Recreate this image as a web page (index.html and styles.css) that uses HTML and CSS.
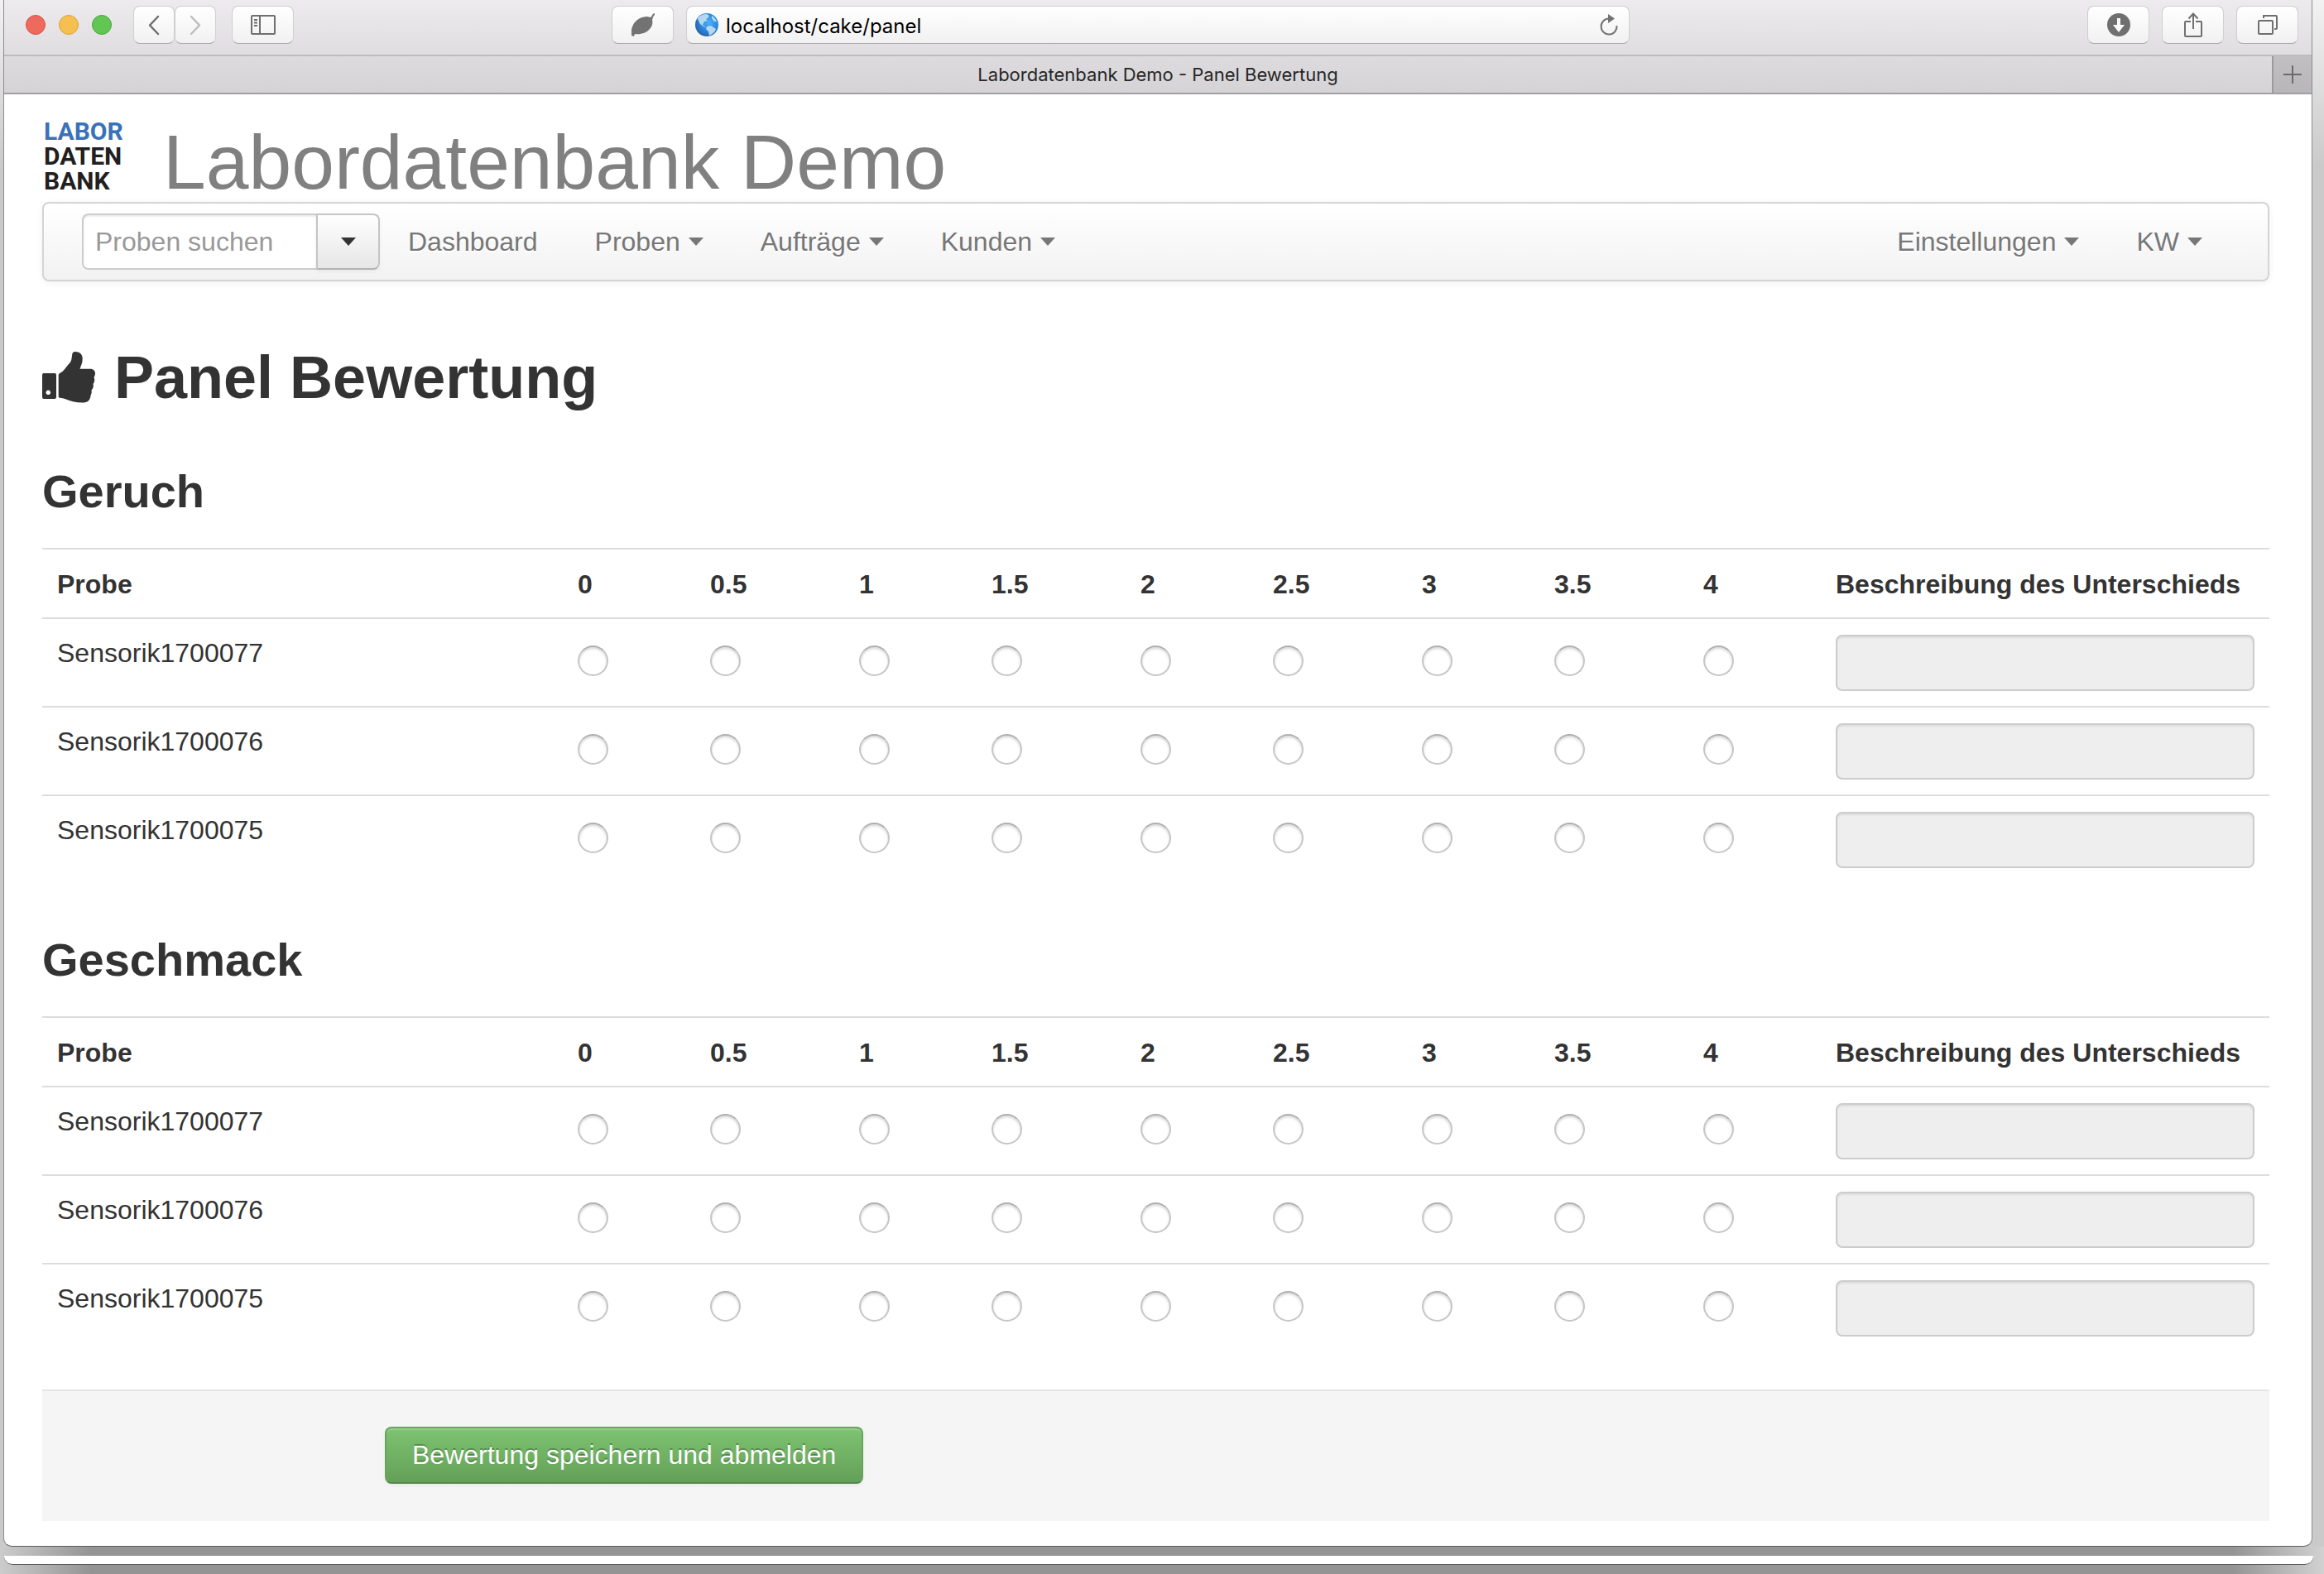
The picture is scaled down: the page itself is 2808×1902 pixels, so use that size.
FILE: index.html
```html
<!DOCTYPE html>
<html lang="de">
<head>
<meta charset="utf-8">
<title>Labordatenbank Demo - Panel Bewertung</title>
<link rel="stylesheet" href="styles.css">
</head>
<body>
<div class="window">
  <div class="toolbar">
    <div class="tools">
      <div class="lights"><span class="light light-red"></span><span class="light light-yellow"></span><span class="light light-green"></span></div>
      <div class="history">
        <button class="tool tool-narrow" aria-label="Zurück"><svg width="14" height="25" viewBox="0 0 14 25" fill="none" stroke="#6f6f6f" stroke-width="2.5" stroke-linecap="round" stroke-linejoin="round"><path d="M12 2 2 12.500 12 23"/></svg></button>
        <button class="tool tool-narrow" aria-label="Vorwärts"><svg width="14" height="25" viewBox="0 0 14 25" fill="none" stroke="#bdbdbd" stroke-width="2.500" stroke-linecap="round" stroke-linejoin="round"><path d="M2 2 12 12.500 2 23"/></svg></button>
      </div>
      <button class="tool" aria-label="Seitenleiste"><svg width="30" height="24" viewBox="0 0 30 24" fill="none" stroke="#6f6f6f" stroke-width="2"><rect x="1" y="1" width="28" height="22" rx="1"/><path d="M11 1v22M4 6h4M4 9.500h4M4 13h4"/></svg></button>
      <button class="tool tool-last" aria-label="Erweiterung"><svg width="28" height="28" viewBox="0 0 28 28" fill="#737373"><path d="M0 27C-1 23 0 18 2 14 5 8 12 4 19 4l4 1c2-1 2-5 5-5v2c-2 1-2 4-3 6 1 4 0 8-3 11-4 5-11 7-18 6l-1 3z"/></svg></button>
    </div>
    <div class="address">
      <svg width="28" height="28" viewBox="0 0 28 28"><defs><radialGradient id="globe" cx=".6" cy=".4" r=".65"><stop offset="0" stop-color="#4fb0f5"/><stop offset=".6" stop-color="#2b86dc"/><stop offset="1" stop-color="#2560a5"/></radialGradient></defs><circle cx="14" cy="14" r="14" fill="url(#globe)"/><path d="M3 6C6 2 10 1 14 1l3 2-2 3-2 1 2 2-4 1-2 4 4 3-3-1-4-3-3-6zM14 16l5-1 6 4c-1 4-4 6-8 8l-1-5-3-3zM20 3c3 2 5 4 6 7l-3 0-3-4z" fill="#c4dff2" opacity=".9"/></svg>
      <input class="address-input" type="text" value="localhost/cake/panel" aria-label="Adresse">
      <button class="reload" aria-label="Neu laden"><svg width="24" height="26" viewBox="0 0 24 26"><path d="M11.500 5.500A9.500 9.500 0 1 0 21.500 14" fill="none" stroke="#737373" stroke-width="2"/><path d="M11 0l8 5.500L11 11z" fill="#737373"/></svg></button>
    </div>
    <div class="tools tools-right">
      <button class="tool" aria-label="Downloads"><svg width="28" height="28" viewBox="0 0 28 28"><circle cx="14" cy="14" r="14" fill="#6f6f6f"/><path d="M12 6h4v8h5l-7 9-7-9h5z" fill="#fafafa"/></svg></button>
      <button class="tool" aria-label="Teilen"><svg width="22" height="30" viewBox="0 0 22 30" fill="none" stroke="#6f6f6f" stroke-width="2"><path d="M8 11H2q-1 0-1 1v16q0 1 1 1h18q1 0 1-1V12q0-1-1-1h-6M11 20V2M5.500 7.500 11 1.500l5.500 6"/></svg></button>
      <button class="tool" aria-label="Tabs"><svg width="24" height="24" viewBox="0 0 24 24" fill="none" stroke="#6f6f6f" stroke-width="2"><rect x="1" y="7" width="17" height="16" rx="1"/><path d="M7 4V1h15q1 0 1 1v14q0 1-1 1h-2"/></svg></button>
    </div>
  </div>
  <div class="tabs">
    <div class="tab">Labordatenbank Demo - Panel Bewertung</div>
    <button class="tab-add" aria-label="Neuer Tab"><svg width="22" height="22" viewBox="0 0 22 22" stroke="#6b6b6b" stroke-width="2"><path d="M11 0v22M0 11h22"/></svg></button>
  </div>

  <main class="page">
    <header class="brand">
      <div class="logo"><span class="logo-accent">LABOR</span><span>DATEN</span><span>BANK</span></div>
      <div class="brand-title">Labordatenbank Demo</div>
    </header>
    <nav class="navbar">
      <div class="search">
        <input class="search-input" type="text" placeholder="Proben suchen" aria-label="Proben suchen">
        <button class="search-toggle" aria-label="Suchoptionen"><span class="caret"></span></button>
      </div>
      <a class="nav-link" href="#">Dashboard</a>
      <a class="nav-link" href="#">Proben<span class="caret"></span></a>
      <a class="nav-link" href="#">Aufträge<span class="caret"></span></a>
      <a class="nav-link" href="#">Kunden<span class="caret"></span></a>
      <a class="nav-link nav-right" href="#">Einstellungen<span class="caret"></span></a>
      <a class="nav-link" href="#">KW<span class="caret"></span></a>
    </nav>

    <h1><svg width="64" height="62" viewBox="0 0 64 62" fill="#333"><path fill-rule="evenodd" d="M2 26h13q2 0 2 2v27q0 2-2 2H2q-2 0-2-2V28q0-2 2-2zM7.300 46.500a2.800 2.800 0 1 0 .01 0z"/><path d="M19.700 28q0-1.500 2-2.300C26 24 29 18 33 14c3-3 2.500-8 3.500-12C37 .5 38.500 0 40 0c5 0 9 3 8.700 9 0 5-2 8-3.200 11.800H58c4 0 6 2.500 6 5.500 0 2-1 3.500-1.500 5 1.500 3 .5 6-1 7.700 1 3-.2 6-2 7.500.8 3-.5 5-1 6.500-.3 6-4 8.500-10 8.500-8 0-15-2-21-4.500-4-1.500-7.800-.5-7.800-3z"/></svg>Panel Bewertung</h1>

    <form>
      <section>
        <h2>Geruch</h2>
        <table>
          <colgroup><col><col class="c-full"><col class="c-half"><col class="c-full"><col class="c-half"><col class="c-full"><col class="c-half"><col class="c-full"><col class="c-half"><col class="c-full"><col class="c-text"></colgroup>
          <thead><tr><th>Probe</th><th>0</th><th>0.5</th><th>1</th><th>1.5</th><th>2</th><th>2.5</th><th>3</th><th>3.5</th><th>4</th><th>Beschreibung des Unterschieds</th></tr></thead>
          <tbody>
            <tr><td>Sensorik1700077</td>
              <td><input type="radio" name="geruch77" value="0" aria-label="0"></td>
              <td><input type="radio" name="geruch77" value="0.5" aria-label="0.5"></td>
              <td><input type="radio" name="geruch77" value="1" aria-label="1"></td>
              <td><input type="radio" name="geruch77" value="1.5" aria-label="1.5"></td>
              <td><input type="radio" name="geruch77" value="2" aria-label="2"></td>
              <td><input type="radio" name="geruch77" value="2.5" aria-label="2.5"></td>
              <td><input type="radio" name="geruch77" value="3" aria-label="3"></td>
              <td><input type="radio" name="geruch77" value="3.5" aria-label="3.5"></td>
              <td><input type="radio" name="geruch77" value="4" aria-label="4"></td>
              <td><input class="note" type="text" disabled aria-label="Beschreibung des Unterschieds"></td></tr>
            <tr><td>Sensorik1700076</td>
              <td><input type="radio" name="geruch76" value="0" aria-label="0"></td>
              <td><input type="radio" name="geruch76" value="0.5" aria-label="0.5"></td>
              <td><input type="radio" name="geruch76" value="1" aria-label="1"></td>
              <td><input type="radio" name="geruch76" value="1.5" aria-label="1.5"></td>
              <td><input type="radio" name="geruch76" value="2" aria-label="2"></td>
              <td><input type="radio" name="geruch76" value="2.5" aria-label="2.5"></td>
              <td><input type="radio" name="geruch76" value="3" aria-label="3"></td>
              <td><input type="radio" name="geruch76" value="3.5" aria-label="3.5"></td>
              <td><input type="radio" name="geruch76" value="4" aria-label="4"></td>
              <td><input class="note" type="text" disabled aria-label="Beschreibung des Unterschieds"></td></tr>
            <tr><td>Sensorik1700075</td>
              <td><input type="radio" name="geruch75" value="0" aria-label="0"></td>
              <td><input type="radio" name="geruch75" value="0.5" aria-label="0.5"></td>
              <td><input type="radio" name="geruch75" value="1" aria-label="1"></td>
              <td><input type="radio" name="geruch75" value="1.5" aria-label="1.5"></td>
              <td><input type="radio" name="geruch75" value="2" aria-label="2"></td>
              <td><input type="radio" name="geruch75" value="2.5" aria-label="2.5"></td>
              <td><input type="radio" name="geruch75" value="3" aria-label="3"></td>
              <td><input type="radio" name="geruch75" value="3.5" aria-label="3.5"></td>
              <td><input type="radio" name="geruch75" value="4" aria-label="4"></td>
              <td><input class="note" type="text" disabled aria-label="Beschreibung des Unterschieds"></td></tr>
          </tbody>
        </table>
      </section>
      <section>
        <h2>Geschmack</h2>
        <table>
          <colgroup><col><col class="c-full"><col class="c-half"><col class="c-full"><col class="c-half"><col class="c-full"><col class="c-half"><col class="c-full"><col class="c-half"><col class="c-full"><col class="c-text"></colgroup>
          <thead><tr><th>Probe</th><th>0</th><th>0.5</th><th>1</th><th>1.5</th><th>2</th><th>2.5</th><th>3</th><th>3.5</th><th>4</th><th>Beschreibung des Unterschieds</th></tr></thead>
          <tbody>
            <tr><td>Sensorik1700077</td>
              <td><input type="radio" name="geschmack77" value="0" aria-label="0"></td>
              <td><input type="radio" name="geschmack77" value="0.5" aria-label="0.5"></td>
              <td><input type="radio" name="geschmack77" value="1" aria-label="1"></td>
              <td><input type="radio" name="geschmack77" value="1.5" aria-label="1.5"></td>
              <td><input type="radio" name="geschmack77" value="2" aria-label="2"></td>
              <td><input type="radio" name="geschmack77" value="2.5" aria-label="2.5"></td>
              <td><input type="radio" name="geschmack77" value="3" aria-label="3"></td>
              <td><input type="radio" name="geschmack77" value="3.5" aria-label="3.5"></td>
              <td><input type="radio" name="geschmack77" value="4" aria-label="4"></td>
              <td><input class="note" type="text" disabled aria-label="Beschreibung des Unterschieds"></td></tr>
            <tr><td>Sensorik1700076</td>
              <td><input type="radio" name="geschmack76" value="0" aria-label="0"></td>
              <td><input type="radio" name="geschmack76" value="0.5" aria-label="0.5"></td>
              <td><input type="radio" name="geschmack76" value="1" aria-label="1"></td>
              <td><input type="radio" name="geschmack76" value="1.5" aria-label="1.5"></td>
              <td><input type="radio" name="geschmack76" value="2" aria-label="2"></td>
              <td><input type="radio" name="geschmack76" value="2.5" aria-label="2.5"></td>
              <td><input type="radio" name="geschmack76" value="3" aria-label="3"></td>
              <td><input type="radio" name="geschmack76" value="3.5" aria-label="3.5"></td>
              <td><input type="radio" name="geschmack76" value="4" aria-label="4"></td>
              <td><input class="note" type="text" disabled aria-label="Beschreibung des Unterschieds"></td></tr>
            <tr><td>Sensorik1700075</td>
              <td><input type="radio" name="geschmack75" value="0" aria-label="0"></td>
              <td><input type="radio" name="geschmack75" value="0.5" aria-label="0.5"></td>
              <td><input type="radio" name="geschmack75" value="1" aria-label="1"></td>
              <td><input type="radio" name="geschmack75" value="1.5" aria-label="1.5"></td>
              <td><input type="radio" name="geschmack75" value="2" aria-label="2"></td>
              <td><input type="radio" name="geschmack75" value="2.5" aria-label="2.5"></td>
              <td><input type="radio" name="geschmack75" value="3" aria-label="3"></td>
              <td><input type="radio" name="geschmack75" value="3.5" aria-label="3.5"></td>
              <td><input type="radio" name="geschmack75" value="4" aria-label="4"></td>
              <td><input class="note" type="text" disabled aria-label="Beschreibung des Unterschieds"></td></tr>
          </tbody>
        </table>
      </section>
      <div class="form-actions"><button class="save" type="submit">Bewertung speichern und abmelden</button></div>
    </form>
  </main>
</div>
<div class="shade"></div>
<div class="shade"><div class="window-behind"></div></div>
</body>
</html>
```
FILE: styles.css
```css
* { box-sizing: border-box; }
body {
  margin: 0;
  color: #333;
  font: 32px/45px "Liberation Sans", Arial, sans-serif;
  background: linear-gradient(#f2f2f2, #cacaca 200px, #cacaca);
}
button, input { font: inherit; margin: 0; }
button { padding: 0; cursor: pointer; }
svg { display: block; flex: none; }

/* browser chrome */
.window {
  margin: 0 14px 0 4px;
  border: 1px solid #8c8c8c;
  border-top: 0;
  border-bottom-color: #5c5c5c;
  border-radius: 0 0 10px 10px;
  background: #fff;
  overflow: hidden;
}
.toolbar {
  display: grid;
  grid-template-columns: 1fr minmax(0, 1140px) 1fr;
  column-gap: 15px;
  align-items: center;
  height: 68px;
  padding: 0 16px 6px;
  border-bottom: 2px solid #bcbbbd;
  background: linear-gradient(#edebee, #dfdde0);
}
.tools { display: flex; align-items: center; gap: 19px; }
.tools-right { justify-content: flex-end; gap: 15px; }
.lights { display: flex; gap: 16px; margin: 0 7px 0 10px; }
.light { width: 24px; height: 24px; border-radius: 50%; border: 1px solid; }
.light-red { background: #ee6a5f; border-color: #d55147; }
.light-yellow { background: #f5c04f; border-color: #dba13b; }
.light-green { background: #62c655; border-color: #4aa73c; }
.history { display: flex; }
.tool {
  display: flex;
  align-items: center;
  justify-content: center;
  width: 75px;
  height: 46px;
  border: 1px solid #cfcfcf;
  border-bottom-color: #a9a9a9;
  border-radius: 8px;
  background: linear-gradient(#fff, #f1f1f1);
}
.tool-narrow { width: 50px; }
.tool-last { margin-left: auto; }
.address {
  display: flex;
  align-items: center;
  height: 46px;
  padding: 0 12px 0 10px;
  border: 1px solid #cfcfcf;
  border-bottom-color: #a9a9a9;
  border-radius: 8px;
  background: linear-gradient(#fff, #f1f1f1);
}
.address-input {
  flex: 1;
  min-width: 0;
  height: 42px;
  padding: 2px 9px 0;
  border: 0;
  background: none;
  color: #000;
  font: 24px/40px Inter, sans-serif;
}
.reload { border: 0; background: none; }
.tabs { display: flex; height: 46px; border-bottom: 2px solid #a1a0a2; }
.tab {
  flex: 1;
  padding-left: 48px;
  text-align: center;
  color: #262626;
  font: 22px/44px Inter, sans-serif;
  background: linear-gradient(#dddbde, #d5d3d6);
}
.tab-add {
  display: flex;
  align-items: center;
  justify-content: center;
  width: 48px;
  border: 0;
  border-left: 2px solid #9b9a9c;
  background: linear-gradient(#c1bfc2, #b8b6b9);
}

/* page */
.page { padding: 30px 51px 30px 46px; }
.brand { display: flex; align-items: flex-end; }
.logo {
  display: flex;
  flex-direction: column;
  width: 146px;
  padding: 0 0 10px 2px;
  color: #231f20;
  font: bold 30px/30px Roboto, "Liberation Sans", sans-serif;
}
.logo-accent { color: #3a72b8; }
.brand-title { color: #808080; font-size: 93px; line-height: 96px; }
.navbar {
  display: flex;
  align-items: center;
  gap: 69px;
  height: 96px;
  padding: 0 79px 0 46px;
  border: 2px solid #d4d4d4;
  border-radius: 8px;
  background: linear-gradient(#fff, #f2f2f2);
  box-shadow: 0 2px 8px rgba(0, 0, 0, .06);
}
.search { display: flex; height: 68px; margin-right: -35px; }
.search-input {
  width: 283px;
  padding: 0 14px;
  border: 2px solid #ccc;
  border-right: 0;
  border-radius: 8px 0 0 8px;
  background: #fff;
  box-shadow: inset 0 2px 2px rgba(0, 0, 0, .07);
}
.search-input::placeholder { color: #999; opacity: 1; }
.search-toggle {
  display: flex;
  align-items: center;
  justify-content: center;
  width: 77px;
  border: 2px solid #c5c5c5;
  border-bottom-color: #b3b3b3;
  border-radius: 0 8px 8px 0;
  background: linear-gradient(#fff, #e6e6e6);
  color: #333;
  box-shadow: 0 2px 4px rgba(0, 0, 0, .05);
}
.caret {
  border: 9px solid transparent;
  border-top: 10px solid currentColor;
  border-bottom: 0;
}
.nav-link {
  display: flex;
  align-items: center;
  gap: 10px;
  color: #777;
  text-decoration: none;
  text-shadow: 0 2px 0 #fff;
}
.nav-right { margin-left: auto; }
h1 {
  display: flex;
  align-items: center;
  gap: 23px;
  margin: 76px 0 5px;
  font-size: 72px;
  line-height: 80px;
}
h2 { margin: 0 0 36px; font-size: 56px; line-height: 64px; }
section { padding-top: 61px; }
table { width: 100%; table-layout: fixed; border-spacing: 0; }
.c-full { width: 160px; }
.c-half { width: 180px; }
.c-text { width: 542px; }
th, td {
  padding: 19px 18px 18px;
  border-top: 2px solid #ddd;
  text-align: left;
  vertical-align: top;
  white-space: nowrap;
}
th { padding: 20px 18px 17px; }
input[type="radio"] {
  appearance: none;
  display: block;
  width: 37px;
  height: 37px;
  margin-top: 13px;
  border: 2px solid #c6c6c6;
  border-top-color: #b0b0b0;
  border-radius: 50%;
  background: #fff;
  box-shadow: inset 0 2px 3px rgba(0, 0, 0, .16);
}
.note {
  display: block;
  width: 100%;
  height: 68px;
  padding: 0 14px;
  border: 2px solid #ccc;
  border-radius: 8px;
  background: #eee;
  box-shadow: inset 0 2px 2px rgba(0, 0, 0, .07);
}
.form-actions {
  margin-top: 46px;
  padding: 43px 0 45px 414px;
  border-top: 2px solid #e5e5e5;
  background: #f5f5f5;
}
.save {
  display: block;
  height: 69px;
  padding: 0 31px;
  border: 2px solid #67a55c;
  border-bottom-color: #55884b;
  border-radius: 8px;
  background: linear-gradient(#7dc370, #64a058);
  color: #fff;
  text-shadow: 0 -2px 0 rgba(0, 0, 0, .25);
  box-shadow: inset 0 2px 0 rgba(255, 255, 255, .2), 0 2px 4px rgba(0, 0, 0, .05);
}

/* edge of the window lying behind */
.shade {
  min-height: 11px;
  padding-bottom: 11px;
  background: linear-gradient(to right, #ccc, #949494 110px, #949494 calc(100% - 110px), #d2d2d2);
}
.window-behind {
  height: 11px;
  margin: 0 13px 0 5px;
  border-bottom: 1px solid #5c5c5c;
  border-radius: 0 0 10px 10px;
  background: #fff;
}
```
